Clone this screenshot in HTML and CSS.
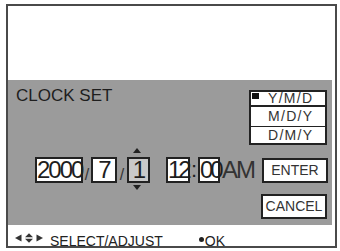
FILE: index.html
```html
<!DOCTYPE html>
<html lang="en">
<head>
    <meta charset="UTF-8">
    <meta name="viewport" content="width=device-width, initial-scale=1.0">
    <title>Clock Set</title>
    <link rel="stylesheet" href="styles.css">
</head>
<body>
    <div class="screen">
        <div class="preview"></div>

        <div class="panel">
            <div class="panel-top">
                <h1 class="title">CLOCK SET</h1>
                <ul class="formats">
                    <li class="format selected">Y/M/D</li>
                    <li class="format">M/D/Y</li>
                    <li class="format">D/M/Y</li>
                </ul>
            </div>

            <div class="date-row">
                <span class="field field-year">2000</span>
                <span class="sep">/</span>
                <span class="field field-month">7</span>
                <span class="sep sep-wide">/</span>
                <span class="field field-day active">1</span>
                <span class="field field-hour">12</span>
                <span class="colon">:</span>
                <span class="field field-min">00</span>
                <span class="ampm">AM</span>
                <button class="btn btn-enter">ENTER</button>
            </div>

            <div class="cancel-row">
                <button class="btn btn-cancel">CANCEL</button>
            </div>
        </div>

        <div class="hint-bar">
            <svg class="hint-icon" width="28" height="10" viewBox="0 0 28 10">
                <polygon points="0,5 6.5,1.5 6.5,8.5" fill="#333"/>
                <polygon points="10,4.2 14,0.2 18,4.2" fill="#333"/>
                <polygon points="10,5.8 14,9.8 18,5.8" fill="#333"/>
                <polygon points="21.5,1.5 28,5 21.5,8.5" fill="#333"/>
            </svg>
            <span class="hint-text">SELECT/ADJUST</span>
            <span class="hint-dot"></span>
            <span class="hint-ok">OK</span>
        </div>
    </div>
</body>
</html>
```

FILE: styles.css
```css
/* General Styles */
body {
    margin: 0;
    font-family: "Liberation Sans", Arial, sans-serif;
    background-color: #fff;
    color: #222;
}

.screen {
    margin: 4px 3px 0 6px;
    height: 244px;
    box-sizing: border-box;
    border: 2px solid #4a4a4a;
    background-color: #fff;
    display: flex;
    flex-direction: column;
}

.preview {
    height: 74px;
}

/* Gray settings panel */
.panel {
    height: 145px;
    box-sizing: border-box;
    margin-right: 3px;
    padding: 10px 4px 0 8px;
    background-color: #9b9b9b;
}

.panel-top {
    display: flex;
    justify-content: space-between;
    align-items: flex-start;
}

.title {
    margin: -3px 0 0 0;
    font-size: 17px;
    line-height: 17px;
    font-weight: normal;
    color: #1e1e1e;
}

.formats {
    list-style: none;
    margin: 0 1px 0 0;
    padding: 0;
    width: 78px;
    box-sizing: border-box;
    border: 2px solid #222;
    background-color: #fff;
}

.format {
    padding-left: 17px;
    font-size: 14px;
    letter-spacing: 1.3px;
    color: #333;
}

.format:nth-child(1) {
    height: 13px;
    line-height: 13px;
}

.format:nth-child(2) {
    height: 19px;
    line-height: 19px;
    border-top: 2px solid #222;
}

.format:nth-child(3) {
    height: 16px;
    line-height: 16px;
    border-top: 1px solid #222;
}

.format.selected {
    position: relative;
}

.format.selected::before {
    content: "";
    position: absolute;
    left: 1px;
    top: 1px;
    width: 7px;
    height: 6px;
    background-color: #111;
}

/* Date / time row */
.date-row {
    display: flex;
    align-items: flex-start;
    height: 26px;
    margin: 12px 0 0 19px;
}

.field {
    box-sizing: border-box;
    height: 26px;
    border: 2px solid #222;
    background-color: #fff;
    font-size: 24px;
    line-height: 22px;
    letter-spacing: -2px;
    text-align: center;
    color: #1e1e1e;
}

.field-year { width: 48px; }
.field-month { width: 26px; }
.field-day { width: 23px; }
.field-hour { width: 24px; margin-left: 16px; letter-spacing: -3px; }
.field-min { width: 22px; letter-spacing: -3px; }

.field.active {
    position: relative;
    background-color: #c9c9c9;
}

.field.active::before,
.field.active::after {
    content: "";
    position: absolute;
    left: 4px;
    border-left: 4px solid transparent;
    border-right: 4px solid transparent;
}

.field.active::before {
    top: -11px;
    border-bottom: 5px solid #222;
}

.field.active::after {
    top: 26px;
    border-top: 5px solid #222;
}

.sep {
    width: 8px;
    padding-top: 10px;
    font-size: 16px;
    line-height: 16px;
    text-align: center;
    color: #333;
}

.sep-wide {
    width: 10px;
}

.colon {
    width: 8px;
    font-size: 22px;
    line-height: 26px;
    text-align: center;
    color: #1e1e1e;
}

.ampm {
    margin-left: 2px;
    font-size: 24px;
    line-height: 26px;
    letter-spacing: -2px;
    color: #333;
}

.btn {
    box-sizing: border-box;
    width: 66px;
    height: 25px;
    padding: 0;
    border: 2px solid #222;
    background-color: #fff;
    font-family: inherit;
    font-size: 14px;
    line-height: 21px;
    color: #333;
}

.btn-enter {
    margin: 1px 0 0 auto;
}

.cancel-row {
    display: flex;
    justify-content: flex-end;
    margin-top: 11px;
}

.btn-cancel {
    margin-right: 1px;
}

/* Bottom hint bar */
.hint-bar {
    height: 21px;
    box-sizing: border-box;
    margin-right: 3px;
    padding: 9px 0 0 7px;
    display: flex;
    align-items: flex-start;
    font-size: 14px;
    line-height: 14px;
    color: #222;
}

.hint-icon {
    margin: -1px 7px 0 0;
}

.hint-dot {
    width: 5px;
    height: 5px;
    margin: 3px 1px 0 36px;
    border-radius: 50%;
    background-color: #222;
}
```
